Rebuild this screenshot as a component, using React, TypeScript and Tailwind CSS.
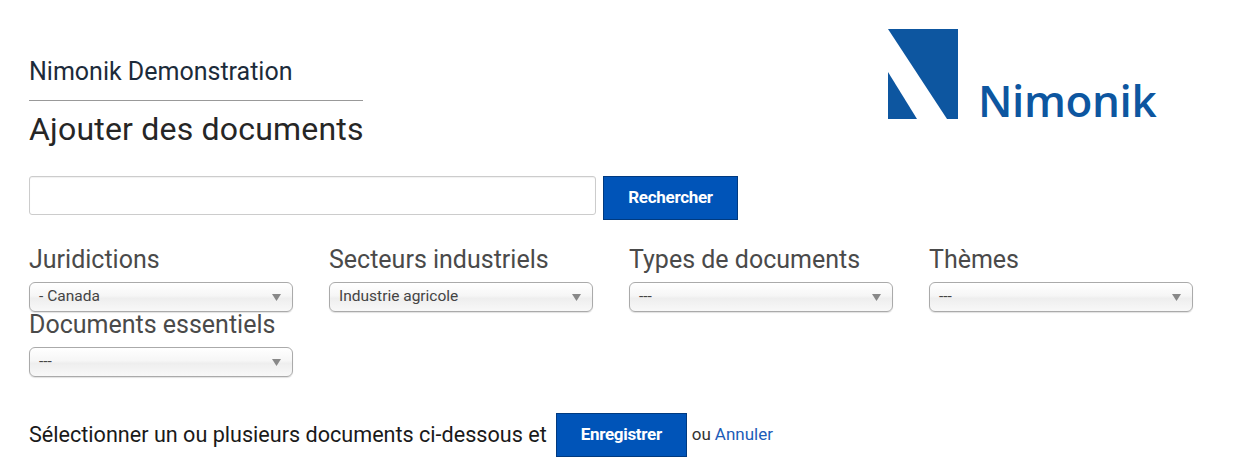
const filters = [
  { label: "Juridictions", value: "- Canada" },
  { label: "Secteurs industriels", value: "Industrie agricole" },
  { label: "Types de documents", value: "---" },
  { label: "Thèmes", value: "---" },
  { label: "Documents essentiels", value: "---" },
];

const FilterSelect = ({ label, value }: { label: string; value: string }) => (
  <div className="w-[300px]">
    <div className="h-[26px] text-[25px] leading-[26px] text-[#4a4a4a]">{label}</div>
    <div className="mt-[9px] flex h-[30px] w-[264px] items-center justify-between rounded-[6px] border border-[#aaaaaa] bg-[linear-gradient(#ffffff_0%,#f6f6f6_45%,#eeeeee_55%,#f8f8f8_100%)] pl-[9px] pr-[11px] text-[15.5px] text-[#444444] shadow-[0_1px_1px_rgba(0,0,0,0.12)]">
      <span>{value}</span>
      <svg width="9" height="7" viewBox="0 0 9 7">
        <path d="M0 0H9L4.5 7Z" fill="#888888" />
      </svg>
    </div>
  </div>
);

const Logo = () => (
  <div className="relative mr-[95px] mt-[28px] h-[92px] w-[270px]">
    <svg width="71" height="91" viewBox="0 0 71 91" className="absolute left-0 top-[1px]">
      <path d="M0 0H70V90H59Z" fill="#0d56a0" />
      <path d="M0 43L29 90H0Z" fill="#0d56a0" />
    </svg>
    <span className="absolute left-[90px] top-[44px] font-['Open_Sans',sans-serif] text-[44px] font-semibold leading-[56px] tracking-[-0.4px] text-[#0d56a0]">
      Nimonik
    </span>
  </div>
);

export default function App() {
  return (
    <div className="h-[460px] w-[1253px] overflow-hidden bg-white pl-[29px] font-['Roboto',sans-serif]">
      <div className="flex h-[176px] justify-between">
        <div className="w-[334px] pt-[55px]">
          <div className="h-[46px] border-b border-[#999999] pt-[1px] text-[25px] leading-[32px] text-[#1c2b3a]">
            Nimonik Demonstration
          </div>
          <h1 className="whitespace-nowrap text-[32px] font-normal leading-[56px] tracking-[0.2px] text-[#262626]">
            Ajouter des documents
          </h1>
        </div>
        <Logo />
      </div>

      <div className="flex items-start gap-[7px]">
        <input className="h-[39px] w-[567px] rounded-[3px] border border-[#cccccc] bg-white shadow-[inset_0_1px_1px_rgba(0,0,0,0.06)]" />
        <button className="h-[44px] w-[135px] border border-[#003a80] bg-[#0054b8] text-[17px] font-bold tracking-[-0.3px] text-white">
          Rechercher
        </button>
      </div>

      <div className="mt-[27px] flex flex-wrap">
        {filters.map((f) => (
          <FilterSelect key={f.label} label={f.label} value={f.value} />
        ))}
      </div>

      <div className="mt-[36px] flex items-center">
        <span className="text-[21.6px] text-[#1a1a1a]">Sélectionner un ou plusieurs documents ci-dessous et</span>
        <button className="ml-[9px] h-[44px] w-[131px] border border-[#003a80] bg-[#0054b8] text-[17px] font-bold tracking-[-0.3px] text-white">
          Enregistrer
        </button>
        <span className="ml-[5px] text-[17px] text-[#333333]">ou</span>
        <a className="ml-[4px] text-[17px] text-[#1c5cb8]">Annuler</a>
      </div>
    </div>
  );
}
